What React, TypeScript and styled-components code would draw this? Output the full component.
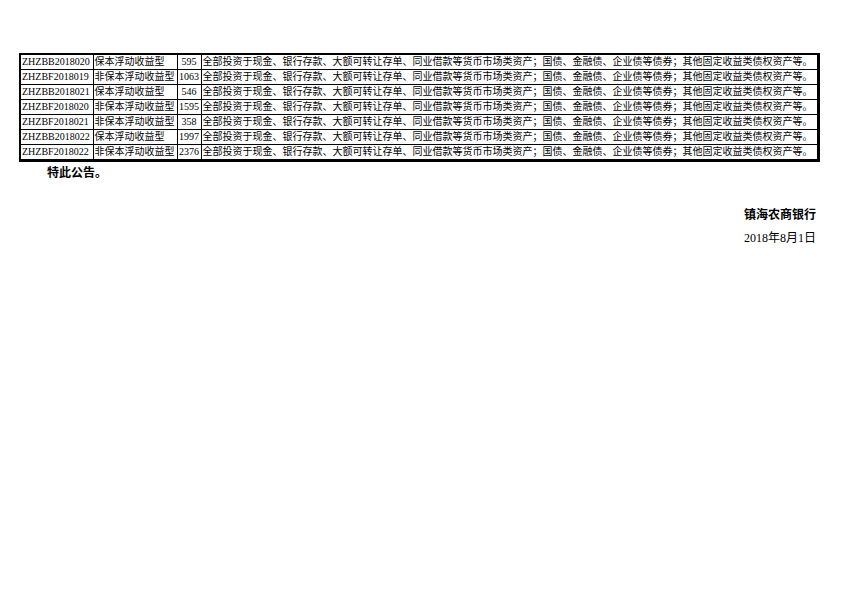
import React from "react";
import styled, { createGlobalStyle } from "styled-components";

const Global = createGlobalStyle`
  html, body { margin: 0; padding: 0; background: #fff; }
  body { font-family: "Liberation Serif", "Noto Sans CJK SC", serif; color: #000; }
`;

const Page = styled.div`
  width: 842px;
  height: 595px;
  box-sizing: border-box;
  padding: 53px 22px 0 19px;
  display: flex;
  flex-direction: column;
`;

const Table = styled.table`
  border-collapse: collapse;
  border-top: 2px solid #000;
  border-left: 2px solid #000;
  border-right: 3px solid #000;
  border-bottom: 3px solid #000;
  width: 801px;
  table-layout: fixed;
  font-size: 10px;
  line-height: 14px;
`;

const Cell = styled.td<{ $align?: string }>`
  border: 1px solid #000;
  height: 14px;
  padding: 0 1px;
  white-space: nowrap;
  overflow: hidden;
  text-align: ${(p) => p.$align || "left"};
  font-family: "Liberation Serif", "Noto Sans CJK SC", serif;
`;

const Notice = styled.div`
  margin: 1px 0 0 28px;
  font-size: 12px;
  font-weight: bold;
  font-family: "Liberation Serif", "Noto Sans CJK SC", serif;
`;

const Signature = styled.div`
  align-self: flex-end;
  margin-top: 24px;
  margin-right: 4px;
  display: flex;
  flex-direction: column;
  align-items: flex-end;
  gap: 5px;
  font-size: 12px;
  font-family: "Liberation Serif", "Noto Sans CJK SC", serif;
`;

const Bank = styled.div`
  font-weight: bold;
`;

const DateLine = styled.div`
  font-weight: normal;
`;

const desc =
  "全部投资于现金、银行存款、大额可转让存单、同业借款等货币市场类资产；国债、金融债、企业债等债券；其他固定收益类债权资产等。";

const rows = [
  ["ZHZBB2018020", "保本浮动收益型", "595"],
  ["ZHZBF2018019", "非保本浮动收益型", "1063"],
  ["ZHZBB2018021", "保本浮动收益型", "546"],
  ["ZHZBF2018020", "非保本浮动收益型", "1595"],
  ["ZHZBF2018021", "非保本浮动收益型", "358"],
  ["ZHZBB2018022", "保本浮动收益型", "1997"],
  ["ZHZBF2018022", "非保本浮动收益型", "2376"],
];

export default function App() {
  return (
    <>
      <Global />
      <Page>
        <Table>
          <colgroup>
            <col style={{ width: 73 }} />
            <col style={{ width: 84 }} />
            <col style={{ width: 24 }} />
            <col />
          </colgroup>
          <tbody>
            {rows.map((r) => (
              <tr key={r[0]}>
                <Cell>{r[0]}</Cell>
                <Cell>{r[1]}</Cell>
                <Cell $align="center">{r[2]}</Cell>
                <Cell>{desc}</Cell>
              </tr>
            ))}
          </tbody>
        </Table>
        <Notice>特此公告。</Notice>
        <Signature>
          <Bank>镇海农商银行</Bank>
          <DateLine>2018年8月1日</DateLine>
        </Signature>
      </Page>
    </>
  );
}
